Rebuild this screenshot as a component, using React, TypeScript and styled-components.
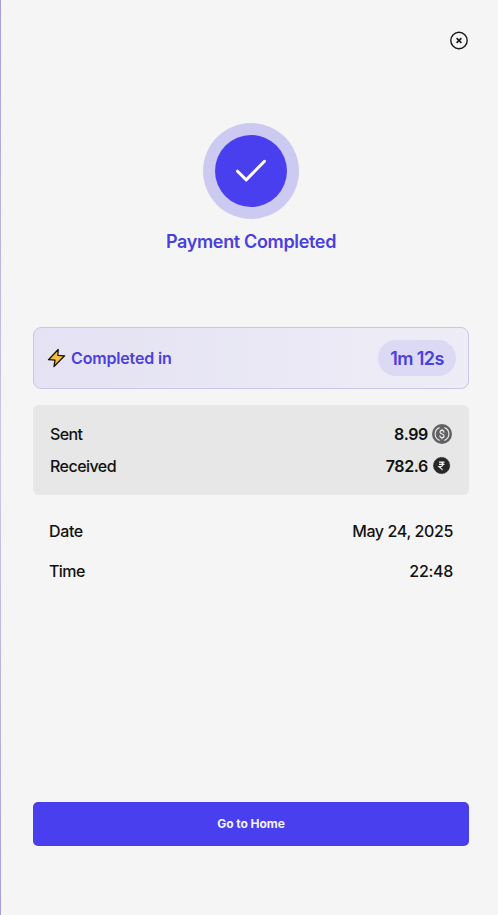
import React from 'react';
import styled, { createGlobalStyle } from 'styled-components';

const GlobalStyle = createGlobalStyle`
  * { box-sizing: border-box; }
  body { margin: 0; background: #f5f5f5; }
`;

const Page = styled.main`
  height: 915px;
  display: flex;
  flex-direction: column;
  padding: 0 29px 69px 32px;
  border-left: 1px solid;
  border-image: linear-gradient(#a5a0df, #cbc8e6 50%, #a5a0df) 1;
  background: #f5f5f5;
  color: #111;
  font-family: Inter, 'Liberation Sans', sans-serif;
`;

const Label = styled.span<{ $size?: number; $weight?: number; $track?: number }>`
  font-size: ${(p) => p.$size ?? 16}px;
  font-weight: ${(p) => p.$weight ?? 500};
  letter-spacing: ${(p) => p.$track ?? 0}px;
  line-height: 24px;
  white-space: nowrap;
`;

const TopBar = styled.header`
  display: flex;
  justify-content: flex-end;
  padding-top: 31px;
  height: 123px;
`;

const CloseButton = styled.button`
  width: 20px;
  height: 20px;
  padding: 0;
  border: 0;
  background: none;
  svg { display: block; }
`;

const Status = styled.section`
  display: flex;
  flex-direction: column;
  align-items: center;
  height: 204px;
  color: #4b40dc;
`;

const Halo = styled.div`
  display: grid;
  place-items: center;
  width: 96px;
  height: 96px;
  margin-bottom: 11px;
  border-radius: 50%;
  background: #cdcaf2;
`;

const Disc = styled.div`
  display: grid;
  place-items: center;
  width: 72px;
  height: 72px;
  border-radius: 50%;
  background: #493fee;
`;

const Duration = styled.section`
  display: flex;
  align-items: center;
  justify-content: space-between;
  height: 62px;
  margin-bottom: 16px;
  padding: 0 12px 0 13px;
  border: 1px solid #c9c5ec;
  border-radius: 8px;
  background: linear-gradient(90deg, #e4e2f3, #eeedf6);
  color: #4b40dc;
`;

const DurationTitle = styled.div`
  display: flex;
  align-items: center;
  gap: 5px;
`;

const Pill = styled.div`
  display: grid;
  place-items: center;
  width: 78px;
  height: 36px;
  padding-top: 1px;
  border-radius: 18px;
  background: #dcd9f4;
`;

const Amounts = styled.section`
  display: flex;
  flex-direction: column;
  gap: 8px;
  height: 90px;
  padding: 17px 17px 0;
  border-radius: 6px;
  background: #e7e7e7;
`;

const Details = styled.section`
  display: flex;
  flex-direction: column;
  gap: 16px;
  padding: 24px 16px 0;
`;

const Row = styled.div`
  display: flex;
  align-items: center;
  justify-content: space-between;
  height: 24px;
`;

const Amount = styled.div`
  display: flex;
  align-items: center;
  gap: 4px;
  svg { display: block; }
`;

const HomeButton = styled.button`
  height: 44px;
  margin-top: auto;
  border: 0;
  border-radius: 5px;
  background: #493fee;
  color: #f3f2ff;
  font-family: inherit;
`;

const CloseIcon = () => (
  <svg width="20" height="20" viewBox="0 0 20 20" fill="none" stroke="#171717">
    <circle cx="10" cy="9.5" r="8.2" strokeWidth="1.4" />
    <path d="m7.6 7.1 4.8 4.8m0-4.8-4.8 4.8" strokeWidth="1.5" />
  </svg>
);

const CheckIcon = () => (
  <svg width="32" height="24" viewBox="0 0 32 24" fill="none" stroke="#fff" strokeWidth="3" strokeLinecap="round" strokeLinejoin="round">
    <path d="m2.5 12.2 8.7 8.7L29.5 2.3" />
  </svg>
);

const BoltIcon = () => (
  <svg width="19" height="20" viewBox="0 0 19 20" fill="#f8bd3c" stroke="#17130a" strokeWidth="1.3" strokeLinejoin="round">
    <path d="M11.2 1.5 1.5 11.7l6.5.5-1 6.3L17.6 7.8l-6.7-.5z" />
  </svg>
);

const DollarCoin = () => (
  <svg width="20" height="20" viewBox="0 0 20 20" fill="none" stroke="#efefef" strokeLinecap="round">
    <circle cx="10" cy="10" r="10" fill="#626264" stroke="none" />
    <path d="M7.3 3.8a6.7 6.7 0 0 0 0 12.4M12.7 3.8a6.7 6.7 0 0 1 0 12.4" strokeWidth="1.1" />
    <path d="M12 8.2C12 7 11.2 6.4 10 6.4S8 7 8 8.1c0 2.6 4.1 1.2 4.1 3.8 0 1.1-.9 1.7-2.1 1.7s-2.1-.6-2.1-1.8M10 5.2v1.2m0 7.2v1.2" strokeWidth="1.1" />
  </svg>
);

const RupeeCoin = () => (
  <svg width="20" height="20" viewBox="0 0 20 20" fill="none" stroke="#f4f4f4">
    <circle cx="9.6" cy="9.5" r="8.1" fill="#272727" stroke="#272727" strokeWidth="1" strokeDasharray="1.2 .6" />
    <path d="M7 6.1h5.5M7 8.3h5.5M7 6.1h1.3c3.4 0 3.4 4.5 0 4.5H7l3.6 3.3" strokeWidth="1.2" />
  </svg>
);

export default function App() {
  return (
    <>
      <GlobalStyle />
      <Page>
        <TopBar>
          <CloseButton aria-label="Close"><CloseIcon /></CloseButton>
        </TopBar>
        <Status>
          <Halo><Disc><CheckIcon /></Disc></Halo>
          <Label $size={18} $weight={600} $track={-0.34}>Payment Completed</Label>
        </Status>
        <Duration>
          <DurationTitle>
            <BoltIcon />
            <Label $weight={600} $track={-0.16}>Completed in</Label>
          </DurationTitle>
          <Pill><Label $size={18} $weight={600} $track={-0.6}>1m 12s</Label></Pill>
        </Duration>
        <Amounts>
          <Row>
            <Label $track={-0.6}>Sent</Label>
            <Amount><Label $weight={600} $track={-0.35}>8.99</Label><DollarCoin /></Amount>
          </Row>
          <Row>
            <Label $track={-0.55}>Received</Label>
            <Amount><Label $weight={600} $track={-0.35}>782.6</Label><RupeeCoin /></Amount>
          </Row>
        </Amounts>
        <Details>
          <Row><Label $track={-0.35}>Date</Label><Label $track={-0.38}>May 24, 2025</Label></Row>
          <Row><Label $track={-0.6}>Time</Label><Label $track={-0.3}>22:48</Label></Row>
        </Details>
        <HomeButton><Label $size={12} $weight={700} $track={-0.05}>Go to Home</Label></HomeButton>
      </Page>
    </>
  );
}
